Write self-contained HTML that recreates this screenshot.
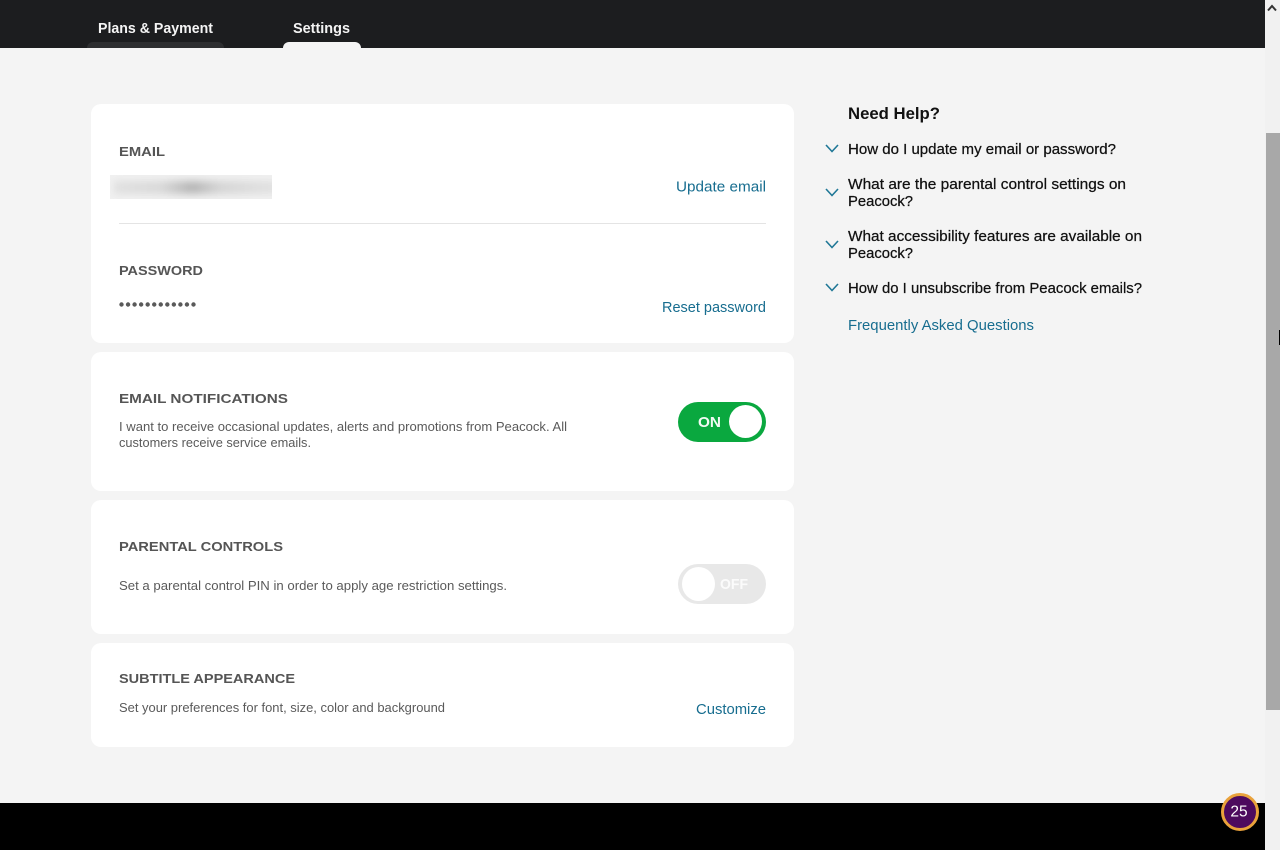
<!DOCTYPE html>
<html lang="en">
<head>
<meta charset="utf-8">
<title>Settings</title>
<style>
html,body{margin:0;padding:0;background:#f4f4f4;width:1280px;height:850px;overflow:hidden}
body{position:relative;font-family:"Liberation Sans",sans-serif}
.b{position:absolute}
.card{position:absolute;left:91px;width:703px;background:#fff;border-radius:10px}
svg{position:absolute;left:0;top:0}
text{font-family:"Liberation Sans",sans-serif}
.tab{font-size:15px;font-weight:700;fill:#f4f4f4}
.h{font-size:13px;font-weight:700;fill:#555}
.d{font-size:13px;fill:#5a5a5a}
.l{font-size:15px;fill:#176d8f}
.q{font-size:15px;fill:#111}
</style>
</head>
<body>
<div class="b" style="left:0;top:0;width:1265px;height:48px;background:#1c1d1f"></div>
<div class="b" style="left:87px;top:42px;width:137px;height:6px;background:#2d2e30;border-radius:6px 6px 0 0"></div>
<div class="b" style="left:283px;top:42px;width:78px;height:6px;background:#f4f4f4;border-radius:6px 6px 0 0"></div>

<div class="card" style="top:104px;height:239px"></div>
<div class="card" style="top:352px;height:139px"></div>
<div class="card" style="top:500px;height:134px"></div>
<div class="card" style="top:643px;height:104px"></div>

<div class="b" style="left:110px;top:175px;width:162px;height:24px;overflow:hidden;background:#f1f1f1">
  <div style="position:absolute;left:4px;top:6px;width:170px;height:13px;filter:blur(4px);background:linear-gradient(90deg,#e0e0e0 0,#d8d8d8 28%,#b4b4b4 46%,#d4d4d4 62%,#dedede 85%,#e2e2e2 100%)"></div>
</div>
<div class="b" style="left:119px;top:223px;width:647px;height:1px;background:#e4e4e4"></div>

<div class="b" style="left:678px;top:402px;width:88px;height:40px;border-radius:20px;background:#0aa83f"></div>
<div class="b" style="left:729px;top:405px;width:33px;height:33px;border-radius:50%;background:#fff"></div>
<div class="b" style="left:678px;top:564px;width:88px;height:40px;border-radius:20px;background:#e8e8e8"></div>
<div class="b" style="left:682px;top:567px;width:33px;height:34px;border-radius:50%;background:#fff"></div>

<div class="b" style="left:0;top:803px;width:1265px;height:47px;background:#000"></div>

<div class="b" style="left:1265px;top:0;width:15px;height:850px;background:#f1f1f1"></div>
<div class="b" style="left:1266px;top:133px;width:14px;height:577px;background:#a8a8a8"></div>
<div class="b" style="left:1279px;top:330px;width:1px;height:15px;background:#000"></div>

<div class="b" style="left:1221px;top:793px;width:32px;height:32px;border:3px solid #e9a23b;border-radius:50%;background:#4d0a5e"></div>

<svg width="1280" height="850" viewBox="0 0 1280 850" xmlns="http://www.w3.org/2000/svg">
  <text class="tab" x="98" y="33" textLength="115" lengthAdjust="spacingAndGlyphs">Plans &amp; Payment</text>
  <text class="tab" x="293" y="33" textLength="57" lengthAdjust="spacingAndGlyphs">Settings</text>

  <text class="h" x="119" y="156" textLength="46" lengthAdjust="spacingAndGlyphs">EMAIL</text>
  <text class="l" x="676" y="191.500" textLength="90" lengthAdjust="spacingAndGlyphs">Update email</text>
  <text class="h" x="119" y="275" textLength="84" lengthAdjust="spacingAndGlyphs">PASSWORD</text>
  <g fill="#5a5a5a">
    <circle cx="121.500" cy="304.500" r="2.200"/><circle cx="128.050" cy="304.500" r="2.200"/><circle cx="134.590" cy="304.500" r="2.200"/><circle cx="141.140" cy="304.500" r="2.200"/><circle cx="147.680" cy="304.500" r="2.200"/><circle cx="154.230" cy="304.500" r="2.200"/><circle cx="160.770" cy="304.500" r="2.200"/><circle cx="167.320" cy="304.500" r="2.200"/><circle cx="173.860" cy="304.500" r="2.200"/><circle cx="180.410" cy="304.500" r="2.200"/><circle cx="186.950" cy="304.500" r="2.200"/><circle cx="193.500" cy="304.500" r="2.200"/>
  </g>
  <text class="l" x="662" y="312" textLength="104" lengthAdjust="spacingAndGlyphs">Reset password</text>

  <text class="h" x="119" y="403" textLength="169" lengthAdjust="spacingAndGlyphs">EMAIL NOTIFICATIONS</text>
  <text class="d" x="119" y="431" textLength="448" lengthAdjust="spacingAndGlyphs">I want to receive occasional updates, alerts and promotions from Peacock. All</text>
  <text class="d" x="119" y="447" textLength="192" lengthAdjust="spacingAndGlyphs">customers receive service emails.</text>
  <text x="698" y="427" font-size="15" font-weight="700" fill="#f2fbf4" textLength="23" lengthAdjust="spacingAndGlyphs">ON</text>

  <text class="h" x="119" y="551" textLength="164" lengthAdjust="spacingAndGlyphs">PARENTAL CONTROLS</text>
  <text class="d" x="119" y="590" textLength="388" lengthAdjust="spacingAndGlyphs">Set a parental control PIN in order to apply age restriction settings.</text>
  <text x="720" y="589" font-size="15" font-weight="700" fill="#fbfbfb" textLength="28" lengthAdjust="spacingAndGlyphs">OFF</text>

  <text class="h" x="119" y="683" textLength="176" lengthAdjust="spacingAndGlyphs">SUBTITLE APPEARANCE</text>
  <text class="d" x="119" y="712" textLength="326" lengthAdjust="spacingAndGlyphs">Set your preferences for font, size, color and background</text>
  <text class="l" x="696" y="714" textLength="70" lengthAdjust="spacingAndGlyphs">Customize</text>

  <text x="848" y="119" font-size="17" font-weight="700" fill="#111" textLength="92" lengthAdjust="spacingAndGlyphs">Need Help?</text>
  <text class="q" x="848" y="154" textLength="268" lengthAdjust="spacingAndGlyphs" stroke="#111" stroke-width=".25">How do I update my email or password?</text>
  <text class="q" x="848" y="189" textLength="278" lengthAdjust="spacingAndGlyphs" stroke="#111" stroke-width=".25">What are the parental control settings on</text>
  <text class="q" x="848" y="206" textLength="65" lengthAdjust="spacingAndGlyphs" stroke="#111" stroke-width=".25">Peacock?</text>
  <text class="q" x="848" y="241" textLength="294" lengthAdjust="spacingAndGlyphs" stroke="#111" stroke-width=".25">What accessibility features are available on</text>
  <text class="q" x="848" y="258" textLength="65" lengthAdjust="spacingAndGlyphs" stroke="#111" stroke-width=".25">Peacock?</text>
  <text class="q" x="848" y="293" textLength="294" lengthAdjust="spacingAndGlyphs" stroke="#111" stroke-width=".25">How do I unsubscribe from Peacock emails?</text>
  <text class="l" x="848" y="330" textLength="186" lengthAdjust="spacingAndGlyphs">Frequently Asked Questions</text>

  <g fill="none" stroke="#1f7796" stroke-width="1.600">
    <path d="M826 145l6 6.500 6-6.500"/>
    <path d="M826 189l6 6.500 6-6.500"/>
    <path d="M826 241l6 6.500 6-6.500"/>
    <path d="M826 284l6 6.500 6-6.500"/>
  </g>
  <path d="M1268 10.500l4-4.500 4 4.500" fill="none" stroke="#333" stroke-width="2"/>
  <text x="1239" y="816.500" font-size="15.500" fill="#fff" text-anchor="middle">25</text>
</svg>
</body>
</html>
